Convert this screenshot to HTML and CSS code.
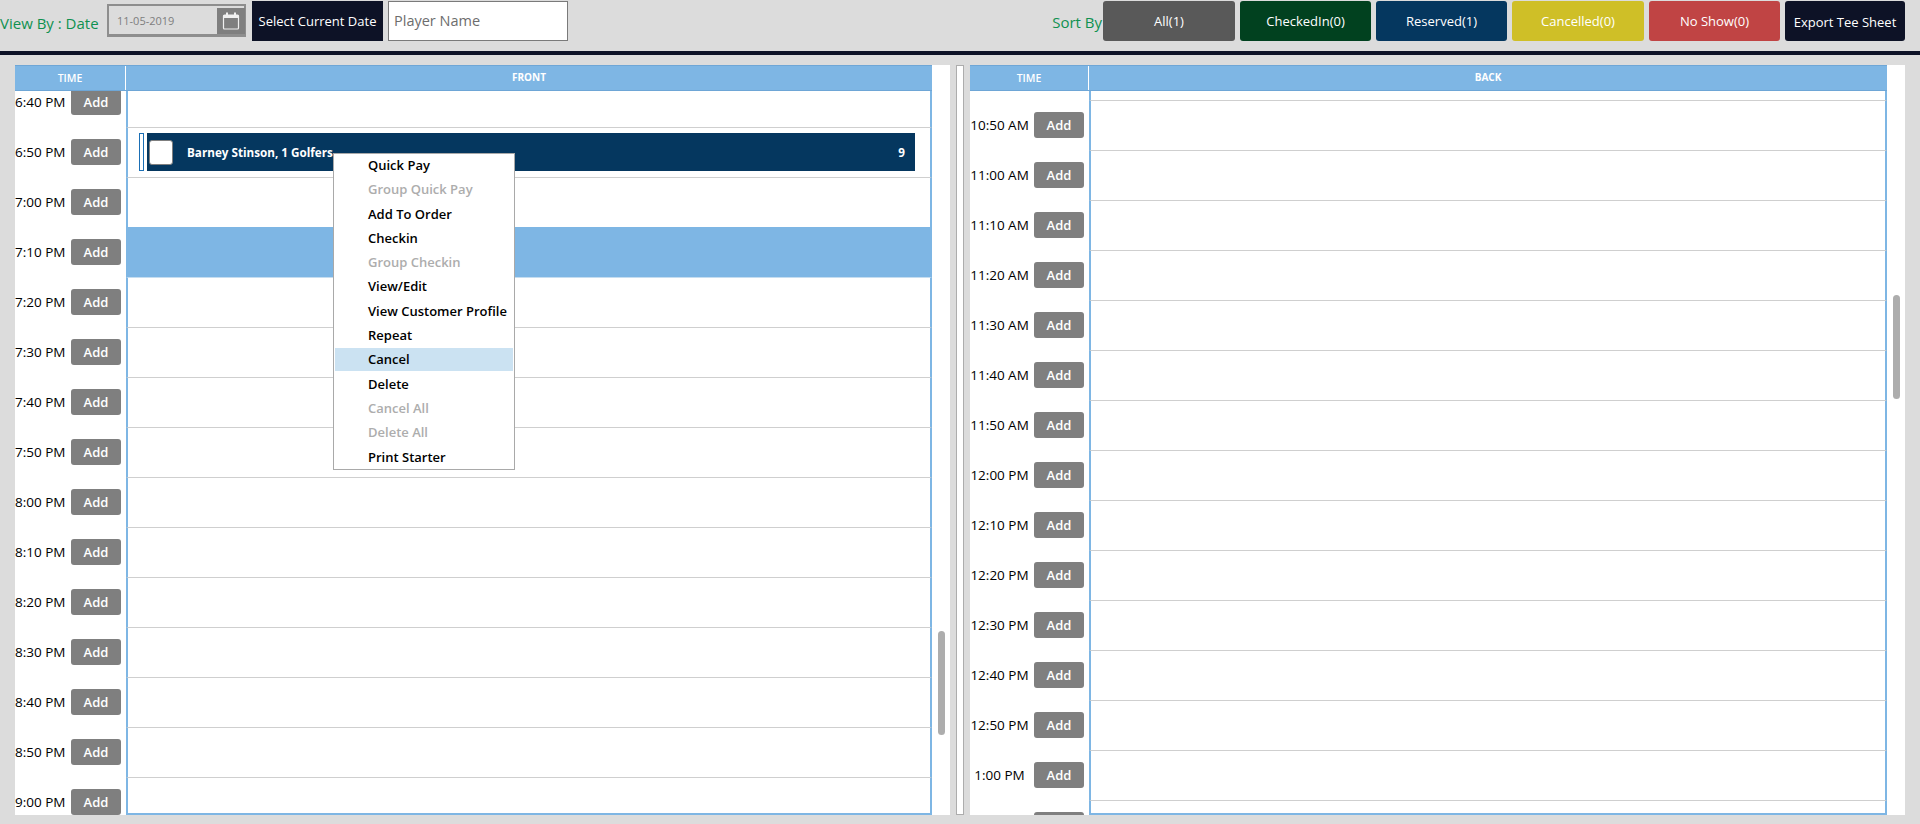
FILE: index.html
```html
<!DOCTYPE html>
<html lang="en">
<head>
<meta charset="UTF-8">
<meta name="viewport" content="width=device-width, initial-scale=1.0">
<title>Tee Sheet</title>
<link rel="stylesheet" href="styles.css">
</head>
<body>
<div class="toolbar">
<div class="toolbar-left">
<span class="label view-label">View By : Date</span>
<div class="date-input">
<span>11-05-2019</span>
<div class="date-icon">
<svg width="18" height="20" viewBox="0 0 18 20">
<rect x="1.5" y="4" width="15" height="14" rx="1" fill="none" stroke="#f0f0f0" stroke-width="1.2"/>
<rect x="1.5" y="4" width="15" height="3" fill="#f0f0f0"/>
<rect x="4" y="1.5" width="2" height="4" fill="#f0f0f0"/>
<rect x="12" y="1.5" width="2" height="4" fill="#f0f0f0"/>
</svg>
</div>
</div>
<button class="btn btn-navy btn-current">Select Current Date</button>
<div class="player-input">Player Name</div>
</div>
<div class="toolbar-right">
<span class="label sort-label">Sort By</span>
<button class="btn sort btn-all">All(1)</button>
<button class="btn sort btn-checked">CheckedIn(0)</button>
<button class="btn sort btn-reserved">Reserved(1)</button>
<button class="btn sort btn-cancelled">Cancelled(0)</button>
<button class="btn sort btn-noshow">No Show(0)</button>
<button class="btn btn-navy btn-export">Export Tee Sheet</button>
</div>
</div>

<div class="sheets">
<div class="sheet sheet-front">
<div class="sheet-main">
<div class="sheet-head">
<div class="head-time">TIME</div>
<div class="head-course">FRONT</div>
</div>
<div class="rows-clip">
<div class="rows rows-front" id="front-rows"></div>
</div>
</div>
<div class="scroll-track"><div class="scroll-thumb thumb-front"></div></div>
</div>

<div class="splitter"></div>

<div class="sheet sheet-back">
<div class="sheet-main">
<div class="sheet-head">
<div class="head-time">TIME</div>
<div class="head-course">BACK</div>
</div>
<div class="rows-clip">
<div class="rows rows-back" id="back-rows"></div>
</div>
</div>
<div class="scroll-track"><div class="scroll-thumb thumb-back"></div></div>
</div>
</div>

<ul class="context-menu">
<li>Quick Pay</li>
<li class="disabled">Group Quick Pay</li>
<li>Add To Order</li>
<li>Checkin</li>
<li class="disabled">Group Checkin</li>
<li>View/Edit</li>
<li>View Customer Profile</li>
<li>Repeat</li>
<li class="hover">Cancel</li>
<li>Delete</li>
<li class="disabled">Cancel All</li>
<li class="disabled">Delete All</li>
<li>Print Starter</li>
</ul>

<script>
const frontTimes = ['6:40 PM', '6:50 PM', '7:00 PM', '7:10 PM', '7:20 PM', '7:30 PM', '7:40 PM', '7:50 PM', '8:00 PM', '8:10 PM', '8:20 PM', '8:30 PM', '8:40 PM', '8:50 PM', '9:00 PM'];
// first back row is scrolled out of view, only its bottom line shows
const backTimes = ['', '10:50 AM', '11:00 AM', '11:10 AM', '11:20 AM', '11:30 AM', '11:40 AM', '11:50 AM', '12:00 PM', '12:10 PM', '12:20 PM', '12:30 PM', '12:40 PM', '12:50 PM', '1:00 PM', '1:10 PM'];

function renderRows(id, times, selected, booked) {
const container = document.getElementById(id);
times.forEach(time => {
const row = document.createElement('div');
row.className = 'row';
let slot = '';
if (time === booked) {
slot = `<div class="booking-mark"></div>
<div class="booking">
<div class="booking-check"></div>
<span class="booking-name">Barney Stinson, 1 Golfers</span>
<span class="booking-holes">9</span>
</div>`;
}
row.innerHTML = `
<div class="row-time">
${time ? `<span class="time-text">${time}</span><button class="add-btn">Add</button>` : ''}
</div>
<div class="row-slot ${time === selected ? 'selected' : ''}">${slot}</div>
`;
container.appendChild(row);
});
}

renderRows('front-rows', frontTimes, '7:10 PM', '6:50 PM');
renderRows('back-rows', backTimes, null, null);
</script>
</body>
</html>
```

FILE: styles.css
```css
* {
box-sizing: border-box;
}
html, body {
height: 100%;
}
body {
margin: 0;
overflow: hidden;
position: relative;
background-color: #dcdcdc;
font-family: "Open Sans", Arial, sans-serif;
color: #000;
}
button {
font-family: inherit;
border: none;
margin: 0;
padding: 0;
}

/* top bar */
.toolbar {
height: 55px;
padding-top: 1px;
display: flex;
justify-content: space-between;
align-items: flex-start;
border-bottom: 4px solid #0d1226;
}
.toolbar-left, .toolbar-right {
display: flex;
align-items: flex-start;
}
.toolbar-right {
padding-right: 15px;
}
.label {
color: #0f9150;
font-size: 15px;
line-height: 40px;
}
.view-label {
width: 107px;
white-space: nowrap;
margin-top: 2px;
}
.sort-label {
margin-right: 1px;
margin-top: 1px;
}
.date-input {
width: 139px;
height: 33px;
margin-top: 3px;
padding-left: 8px;
border: 2px solid #8e8e8e;
border-bottom-width: 3px;
display: flex;
align-items: flex-end;
justify-content: space-between;
font-size: 11px;
color: #7e7e7e;
}
.date-input span {
margin-bottom: 3px;
line-height: 21px;
}
.date-icon {
width: 28px;
height: 26px;
margin-right: -1px;
background-color: #7f7f7f;
display: flex;
align-items: center;
justify-content: center;
}
.btn {
height: 40px;
color: #fff;
font-size: 13px;
border-radius: 3px;
}
.btn-navy {
background-color: #0d1226;
}
.btn-current {
width: 131px;
margin-left: 6px;
border-radius: 0;
}
.player-input {
width: 180px;
height: 40px;
margin-left: 5px;
padding-left: 5px;
background-color: #fff;
border: 1px solid #7a7a7a;
line-height: 38px;
font-size: 14.5px;
color: #6d6d6d;
}
.sort {
width: 131px;
margin-right: 5px;
}
.btn-all {
width: 132px;
background-color: #595959;
}
.btn-checked { background-color: #01411f; }
.btn-reserved { background-color: #05375f; }
.btn-cancelled {
width: 132px;
background-color: #cfbf27;
}
.btn-noshow { background-color: #c04444; }
.btn-export {
width: 120px;
padding-top: 2px;
}

/* tee sheets */
.sheets {
height: 750px;
margin-top: 10px;
padding: 0 15px;
display: flex;
}
.sheet {
width: 935px;
display: flex;
background-color: #fff;
}
.sheet-main {
flex: 1;
min-width: 0;
display: flex;
flex-direction: column;
}
.scroll-track {
width: 18px;
position: relative;
}
.scroll-thumb {
position: absolute;
left: 6px;
width: 7px;
background-color: #adadad;
border-radius: 4px;
}
.thumb-front {
top: 566px;
height: 104px;
}
.thumb-back {
top: 230px;
height: 104px;
}
.splitter {
width: 8px;
margin: 0 6px;
background-color: #fff;
border: 1px solid #adadad;
}

.sheet-head {
display: flex;
height: 26px;
flex-shrink: 0;
background-color: #7eb6e4;
color: #fff;
font-size: 10px;
line-height: 22px;
text-align: center;
border-top: 1px solid #6ea6d6;
border-bottom: 1px solid #6ea6d6;
}
.sheet-front .head-time {
width: 111px;
}
.sheet-back .head-time {
width: 119px;
}
.head-time {
font-size: 10.5px;
font-weight: 600;
line-height: 24px;
border-right: 1px solid #fff;
}
.head-course {
flex: 1;
font-weight: 700;
}

.rows-clip {
flex: 1;
min-height: 0;
overflow: hidden;
position: relative;
}
/* blue bottom edge sits only under the course column */
.rows-clip::after {
content: "";
position: absolute;
right: 0;
bottom: 0;
height: 2px;
background-color: #7eb6e4;
}
.sheet-front .rows-clip::after {
left: 111px;
}
.sheet-back .rows-clip::after {
left: 119px;
}
.rows-front {
margin-top: -13px;
}
.rows-back {
margin-top: -40px;
}
.row {
display: flex;
height: 50px;
}
.row-time {
display: flex;
align-items: center;
flex-shrink: 0;
padding-bottom: 2px;
}
.sheet-front .row-time {
width: 111px;
}
.sheet-back .row-time {
width: 119px;
}
.time-text {
font-size: 13.5px;
text-align: center;
white-space: nowrap;
}
.sheet-front .time-text {
width: 56px;
padding-right: 6px;
}
.sheet-back .time-text {
width: 64px;
padding-right: 5px;
}
.add-btn {
width: 50px;
height: 26px;
background-color: #7f7f7f;
color: #fff;
font-size: 13px;
font-weight: 600;
border-radius: 3px;
}
.row-slot {
flex: 1;
position: relative;
border-left: 2px solid #7eb6e4;
border-right: 2px solid #7eb6e4;
border-bottom: 1px solid #cfcfcf;
display: flex;
align-items: flex-start;
padding: 5px 14px 0 11px;
}
.row-slot.selected {
background-color: #7eb6e4;
border-bottom-color: #c5ddf0;
box-shadow: 0 -1px 0 #7eb6e4;
}
.booking-mark {
width: 5px;
height: 38px;
margin-right: 3px;
background-color: #fff;
border: 1px solid #1b6fb5;
}
.booking {
flex: 1;
height: 38px;
margin-right: 1px;
display: flex;
align-items: center;
background-color: #05375f;
color: #fff;
font-size: 11.7px;
font-weight: 700;
padding: 0 10px 0 2px;
}
.booking-check {
width: 24px;
height: 25px;
background-color: #fff;
border: 1px solid #7f7f7f;
border-radius: 3px;
margin-right: 14px;
}
.booking-name {
flex: 1;
}

/* right click menu */
.context-menu {
position: absolute;
left: 333px;
top: 153px;
width: 182px;
height: 317px;
margin: 0;
padding: 0 1px;
list-style: none;
background-color: #fff;
border: 1px solid #a9a9a9;
font-size: 13px;
font-weight: 600;
}
.context-menu li {
height: 23px;
margin-bottom: 1.3px;
line-height: 23px;
padding-left: 33px;
white-space: nowrap;
}
.context-menu .disabled {
color: #adadad;
}
.context-menu .hover {
background-color: #cbe2f2;
}
```
